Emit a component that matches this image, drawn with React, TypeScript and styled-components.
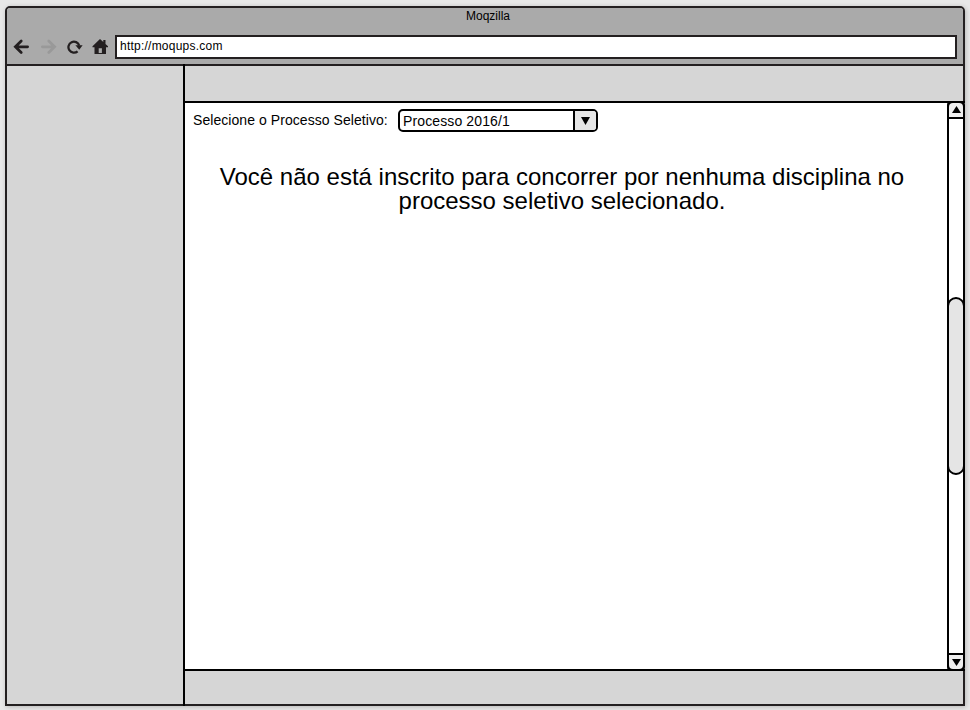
import React from "react";
import styled, { createGlobalStyle } from "styled-components";

const INK = "#231f20";

const GlobalStyle = createGlobalStyle`
  *, *::before, *::after { box-sizing: border-box; }
  body {
    margin: 0;
    background: #e8e8e8;
    color: #000;
    font-family: "Liberation Sans", Arial, Helvetica, sans-serif;
    overflow: hidden;
  }
`;

const Desktop = styled.main`
  height: 710px;
  width: 970px;
  padding: 6px 5px 4px;
`;

const BrowserWindow = styled.section`
  display: flex;
  flex-direction: column;
  width: 960px;
  height: 700px;
  border: 2px solid ${INK};
  border-radius: 5px 5px 0 0;
  background: #d6d6d6;
  box-shadow: 1px 1px 5px rgba(0, 0, 0, 0.22);
`;

const Chrome = styled.header`
  flex: 0 0 58px;
  border-bottom: 2px solid ${INK};
  border-radius: 3px 3px 0 0;
  background: #aaa;
`;

const WindowTitle = styled.div`
  height: 27px;
  padding: 1px 0 0 6px;
  font-size: 12px;
  line-height: 14px;
  text-align: center;
`;

const Toolbar = styled.nav`
  display: flex;
  align-items: center;
  height: 24px;
  padding: 0 6px;
`;

const ToolIcon = styled.svg<{ $gap: number; $muted?: boolean }>`
  display: block;
  flex: none;
  width: 16px;
  height: 16px;
  margin-right: ${(p) => p.$gap}px;
  color: ${(p) => (p.$muted ? "#999" : INK)};
`;

const AddressBar = styled.div`
  flex: 1;
  height: 24px;
  padding-left: 3px;
  border: 2px solid ${INK};
  background: #fff;
  font-size: 12px;
  line-height: 19px;
  letter-spacing: 0.23px;
`;

const Body = styled.div`
  display: flex;
  flex: 1;
  min-height: 0;
`;

const Sidebar = styled.aside`
  flex: 0 0 178px;
  margin: -2px 0;
  border-right: 2px solid #000;
`;

const Main = styled.div`
  flex: 1;
  display: flex;
  flex-direction: column;
  padding: 35px 0 33px;
  min-width: 0;
`;

const Panel = styled.div`
  display: flex;
  flex: 1;
  margin-right: -2px;
  border: solid #000;
  border-width: 2px 0;
  background: #fff;
`;

const Content = styled.div`
  flex: 1;
  min-width: 0;
`;

const FilterRow = styled.label`
  display: flex;
  align-items: flex-start;
  padding: 6px 0 0 8px;
  font-size: 14px;
`;

const FilterLabel = styled.span`
  width: 205px;
  line-height: 22px;
  letter-spacing: 0.06px;
  white-space: nowrap;
`;

const Select = styled.span`
  display: flex;
  width: 200px;
  height: 23px;
  border: 2px solid #000;
  border-radius: 5px;
  background: #fff;
  overflow: hidden;
`;

const SelectValue = styled.span`
  flex: 1;
  padding-left: 3px;
  line-height: 20px;
  letter-spacing: 0.12px;
`;

const SelectArrow = styled.span`
  display: flex;
  align-items: center;
  justify-content: center;
  width: 23px;
  border-left: 2px solid #000;
  background: #e5e5e5;
`;

const Message = styled.h1`
  width: 720px;
  margin: 33px 0 0 17px;
  font-size: 24px;
  font-weight: 400;
  line-height: 24px;
  text-align: center;
`;

const Scrollbar = styled.div`
  display: flex;
  flex-direction: column;
  width: 18px;
  margin: -2px 0;
  border: 2px solid #000;
  border-radius: 4px;
  background: #000;
`;

const ScrollButton = styled.div<{ $side: "top" | "bottom" }>`
  display: flex;
  justify-content: center;
  height: 14px;
  padding-top: ${(p) => (p.$side === "top" ? 3 : 4)}px;
  background: #efefef;
  border-radius: ${(p) => (p.$side === "top" ? "4px 4px 0 0" : "0 0 4px 4px")};
`;

const Track = styled.div`
  flex: 1;
  margin: 2px 0;
  padding-top: 178px;
  background: #fff;
`;

const Thumb = styled.div`
  height: 178px;
  margin: 0 -2px;
  border: 2px solid #000;
  border-radius: 9px;
  background: #e5e5e5;
`;

const Triangle = styled.svg`
  display: block;
  flex: none;
  overflow: visible;
`;

export default function App() {
  return (
    <>
      <GlobalStyle />
      <Desktop>
        <BrowserWindow>
          <Chrome>
            <WindowTitle>Moqzilla</WindowTitle>
            <Toolbar>
              <ToolIcon $gap={12} viewBox="0 0 16 16" fill="none" stroke="currentColor" strokeWidth="2.8" strokeLinecap="round">
                <path d="M8.2 2 2.4 7.8l5.8 5.8M2.6 7.8h12" />
              </ToolIcon>
              <ToolIcon $gap={10} $muted viewBox="0 0 16 16" fill="none" stroke="currentColor" strokeWidth="2.8" strokeLinecap="round">
                <path d="M7.8 2l5.8 5.8-5.8 5.8M13.4 7.8h-12" />
              </ToolIcon>
              <ToolIcon $gap={9} viewBox="0 0 16 16">
                <path d="M10.6 12.3A5.5 5.5 0 1 1 12.2 6.6" fill="none" stroke="currentColor" strokeWidth="2.3" />
                <path d="M8.4 6.2h7.2l-3.3 4.6z" fill="currentColor" />
              </ToolIcon>
              <ToolIcon $gap={7} viewBox="0 0 16 16" fill="currentColor">
                <path fillRule="evenodd" d="M8 0l3.3 3V1h2.2v4L16 7.3v1h-2V15H2.5V8.3H.5v-1zM6.7 9.2v4.8h3.2V9.2z" />
              </ToolIcon>
              <AddressBar>http://moqups.com</AddressBar>
            </Toolbar>
          </Chrome>
          <Body>
            <Sidebar />
            <Main>
              <Panel>
                <Content>
                  <FilterRow>
                    <FilterLabel>Selecione o Processo Seletivo:</FilterLabel>
                    <Select>
                      <SelectValue>Processo 2016/1</SelectValue>
                      <SelectArrow>
                        <Triangle width="9" height="8" viewBox="0 0 9 8">
                          <path d="M0 0h9L4.5 8z" />
                        </Triangle>
                      </SelectArrow>
                    </Select>
                  </FilterRow>
                  <Message>
                    Você não está inscrito para concorrer por nenhuma disciplina no processo seletivo selecionado.
                  </Message>
                </Content>
                <Scrollbar>
                  <ScrollButton $side="top">
                    <Triangle width="9" height="7" viewBox="0 0 9 7">
                      <path d="M4.5 0 9 7H0z" />
                    </Triangle>
                  </ScrollButton>
                  <Track>
                    <Thumb />
                  </Track>
                  <ScrollButton $side="bottom">
                    <Triangle width="9" height="7" viewBox="0 0 9 7">
                      <path d="M0 0h9L4.5 7z" />
                    </Triangle>
                  </ScrollButton>
                </Scrollbar>
              </Panel>
            </Main>
          </Body>
        </BrowserWindow>
      </Desktop>
    </>
  );
}
